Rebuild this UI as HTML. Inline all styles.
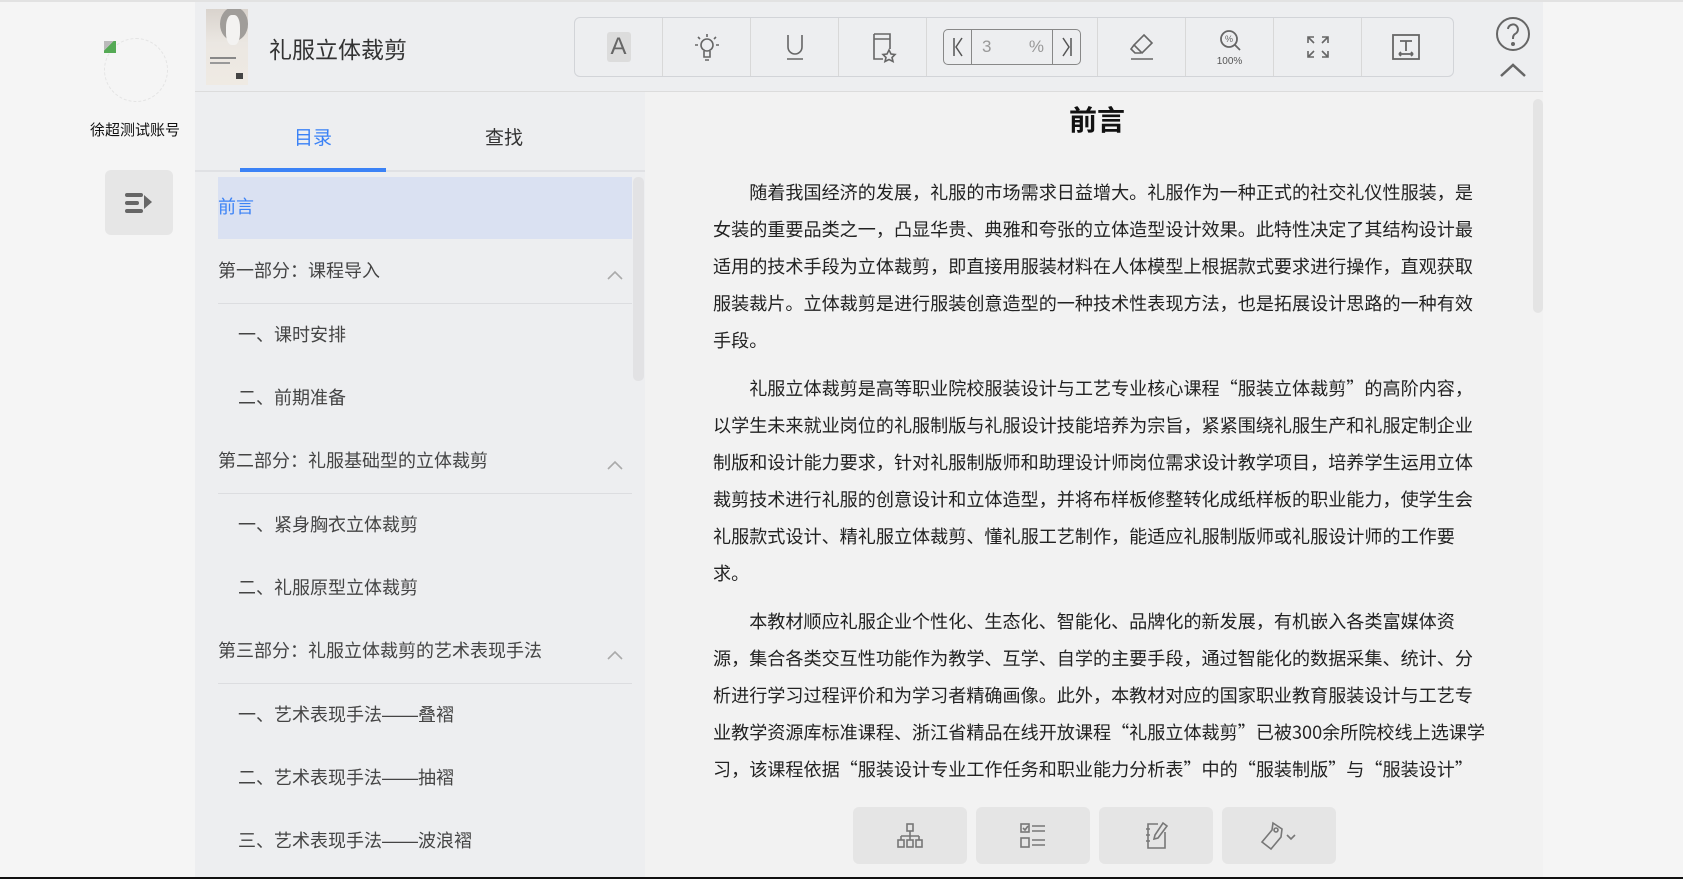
<!DOCTYPE html>
<html><head><meta charset="utf-8"><style>
*{margin:0;padding:0;box-sizing:border-box}
body{width:1683px;height:879px;overflow:hidden;background:#f5f5f5;font-family:"Liberation Sans","Noto Sans CJK SC",sans-serif;position:relative;color:#333}
.abs{position:absolute}
.topline{left:0;top:0;width:1683px;height:2px;background:#e2e2e2}
.header{left:195px;top:2px;width:1348px;height:90px;background:#edeef0;border-bottom:1px solid #dcdcdc}
.toc{left:195px;top:92px;width:450px;height:787px;background:#edeef0}
.content{left:645px;top:92px;width:898px;height:787px;background:#f2f2f2}
.tb{left:574px;top:17px;width:880px;height:60px;border:1px solid #d2d4d8;border-radius:6px;display:flex}
.tb .c{width:88px;height:100%;border-right:1px solid #d8d8d8;position:relative;display:flex;align-items:center;justify-content:center}
.tb .c:last-child{border-right:none}
.item{position:absolute;left:218px;font-size:18px;color:#444;white-space:nowrap}
.sub{left:238px}
.sep{position:absolute;left:218px;width:414px;height:1px;background:#dcdde0}
.chev{position:absolute;left:607px;width:16px;height:16px}
.p{position:absolute;left:713px;font-size:18.1px;color:#222;line-height:37px;white-space:nowrap;font-family:"Noto Sans CJK SC","Liberation Sans",sans-serif}
.btn{position:absolute;top:807px;width:114px;height:57px;background:#e5e5e5;border-radius:6px;display:flex;align-items:center;justify-content:center}
</style></head><body>
<div class="abs topline"></div>
<div class="abs" style="left:104px;top:38px;width:64px;height:64px;border-radius:50%;border:1px dashed #e4e4e4"></div>
<div class="abs" style="left:104px;top:41px;width:12px;height:12px;background:linear-gradient(135deg,#bbb 40%,#5a5 40%)"></div>
<div class="abs" style="left:70px;top:119px;width:130px;text-align:center;font-size:15px;color:#111">徐超测试账号</div>
<div class="abs" style="left:105px;top:170px;width:68px;height:65px;background:#e6e6e6;border-radius:6px">
<svg width="68" height="65" viewBox="0 0 68 65"><g fill="#666"><rect x="20" y="23" width="18" height="4" rx="2"/><rect x="20" y="31" width="14" height="4" rx="2"/><rect x="20" y="39" width="18" height="4" rx="2"/><path d="M39 25 L47 32 L39 39Z"/></g></svg></div>
<div class="abs header"></div>
<div class="abs" style="left:206px;top:9px;width:42px;height:76px;background:linear-gradient(180deg,#d9d3cd 0%,#ebe7e2 45%,#efeae3 100%);overflow:hidden">
<div class="abs" style="left:14px;top:-2px;width:28px;height:34px;border-radius:50%;background:#a09d9a"></div>
<div class="abs" style="left:20px;top:6px;width:14px;height:30px;background:#f3f2f1;border-radius:40%"></div>
<div class="abs" style="left:4px;top:48px;width:26px;height:2px;background:#888"></div>
<div class="abs" style="left:4px;top:53px;width:20px;height:2px;background:#999"></div>
<div class="abs" style="left:30px;top:64px;width:7px;height:6px;background:#444"></div></div>
<div class="abs" style="left:269px;top:31px;font-size:23px;color:#333">礼服立体裁剪</div>
<div class="abs tb">
<div class="c"><div style="width:24px;height:30px;background:#dcdcdc;border-radius:3px;text-align:center;font-size:24px;line-height:30px;color:#666">A</div></div>
<div class="c"><svg width="30" height="32" viewBox="0 0 30 32" fill="none" stroke="#666" stroke-width="1.6"><circle cx="15" cy="14" r="6"/><path d="M12 20v6h6v-6M13 29h4M15 3v3M6 6l2 2M24 6l-2 2M3 14h3M24 14h3"/></svg></div>
<div class="c"><svg width="24" height="30" viewBox="0 0 24 30" fill="none" stroke="#666" stroke-width="1.6"><path d="M5 3v12a7 7 0 0 0 14 0V3M4 27h16"/></svg></div>
<div class="c"><svg width="28" height="32" viewBox="0 0 28 32" fill="none" stroke="#666" stroke-width="1.6"><path d="M5 3h16v15M5 3v25h9M5 8h16"/><path d="M20 19l2 4 4 .5-3 3 1 4-4-2-4 2 1-4-3-3 4-.5z"/></svg></div>
<div class="c" style="width:171px"><div style="width:138px;height:36px;border:1px solid #888;border-radius:5px;display:flex;font-size:17px;color:#999;align-items:center"><span style="width:28px;border-right:1px solid #888;height:100%;display:flex;align-items:center;justify-content:center"><svg width="14" height="22" viewBox="0 0 14 22" fill="none" stroke="#555" stroke-width="1.5"><path d="M3 2v18M11 2L5 11l6 9"/></svg></span><span style="flex:1;padding-left:10px">3<span style="float:right;padding-right:8px">%</span></span><span style="width:28px;border-left:1px solid #888;height:100%;display:flex;align-items:center;justify-content:center"><svg width="14" height="22" viewBox="0 0 14 22" fill="none" stroke="#555" stroke-width="1.5"><path d="M11 2v18M3 2l6 9-6 9"/></svg></span></div></div>
<div class="c"><svg width="30" height="32" viewBox="0 0 30 32" fill="none" stroke="#666" stroke-width="1.6"><path d="M17 4l8 8-10 10-8-8zM7 14l-3 4 4 4h6M4 28h22"/></svg></div>
<div class="c" style="flex-direction:column"><svg width="26" height="26" viewBox="0 0 26 26" fill="none" stroke="#666" stroke-width="1.8"><circle cx="12" cy="11" r="8"/><path d="M18 17l5 5"/><text x="12" y="14" font-size="9" text-anchor="middle" fill="#666" stroke="none" font-family="Liberation Sans">%</text></svg><div style="font-size:10px;color:#555;margin-top:2px">100%</div></div>
<div class="c"><svg width="28" height="28" viewBox="0 0 28 28" fill="none" stroke="#666" stroke-width="1.6"><path d="M4 10V4h6M4 4l6 6M24 10V4h-6M24 4l-6 6M4 18v6h6M4 24l6-6M24 18v6h-6M24 24l-6-6"/></svg></div>
<div class="c"><svg width="32" height="30" viewBox="0 0 32 30" fill="none" stroke="#666" stroke-width="1.8"><rect x="3" y="3" width="26" height="24"/><path d="M10 9h12M16 9v10M9 22h14M9 22l2-2M9 22l2 2M23 22l-2-2M23 22l-2 2"/></svg></div>
</div>
<svg class="abs" style="left:1494px;top:16px" width="38" height="66" viewBox="0 0 38 66" fill="none" stroke="#666" stroke-width="2"><circle cx="19" cy="18" r="16"/><path d="M14 13a5 5 0 1 1 7 5c-2 1-2 3-2 5"/><circle cx="19" cy="28" r="1" fill="#666"/><path d="M7 60l12-11 12 11" stroke-width="2.5"/></svg>
<div class="abs toc"></div>
<div class="abs" style="left:294px;top:123px;font-size:19px;color:#3b82f6">目录</div>
<div class="abs" style="left:485px;top:123px;font-size:19px;color:#333">查找</div>
<div class="abs" style="left:195px;top:170px;width:450px;height:2px;background:#e0e1e4"></div>
<div class="abs" style="left:240px;top:168px;width:146px;height:4px;background:#3b82f6"></div>
<div class="abs" style="left:218px;top:177px;width:414px;height:62px;background:#dae1f2"></div>
<div class="abs" style="left:633px;top:177px;width:11px;height:204px;background:#e2e2e4;border-radius:5px"></div>
<div class="item" style="top:193px;color:#3b82f6">前言</div>
<div class="item" style="top:257px">第一部分：课程导入</div>
<svg class="chev" style="top:268px" viewBox="0 0 16 16" fill="none" stroke="#aaa" stroke-width="1.6"><path d="M1 11l7-7 7 7"/></svg>
<div class="sep" style="top:303px"></div>
<div class="item sub" style="top:321px">一、课时安排</div>
<div class="item sub" style="top:384px">二、前期准备</div>
<div class="item" style="top:447px">第二部分：礼服基础型的立体裁剪</div>
<svg class="chev" style="top:458px" viewBox="0 0 16 16" fill="none" stroke="#aaa" stroke-width="1.6"><path d="M1 11l7-7 7 7"/></svg>
<div class="sep" style="top:493px"></div>
<div class="item sub" style="top:511px">一、紧身胸衣立体裁剪</div>
<div class="item sub" style="top:574px">二、礼服原型立体裁剪</div>
<div class="item" style="top:637px">第三部分：礼服立体裁剪的艺术表现手法</div>
<svg class="chev" style="top:648px" viewBox="0 0 16 16" fill="none" stroke="#aaa" stroke-width="1.6"><path d="M1 11l7-7 7 7"/></svg>
<div class="sep" style="top:683px"></div>
<div class="item sub" style="top:701px">一、艺术表现手法——叠褶</div>
<div class="item sub" style="top:764px">二、艺术表现手法——抽褶</div>
<div class="item sub" style="top:827px">三、艺术表现手法——波浪褶</div>
<div class="abs content"></div>
<div class="abs" style="left:1533px;top:99px;width:10px;height:214px;background:#e4e4e4;border-radius:5px"></div>
<div class="abs" style="left:1037px;top:99px;width:120px;text-align:center;font-size:28px;font-weight:bold;color:#111">前言</div>
<div class="p" style="top:174px">
<div>　　随着我国经济的发展，礼服的市场需求日益增大。礼服作为一种正式的社交礼仪性服装，是</div>
<div>女装的重要品类之一，凸显华贵、典雅和夸张的立体造型设计效果。此特性决定了其结构设计最</div>
<div>适用的技术手段为立体裁剪，即直接用服装材料在人体模型上根据款式要求进行操作，直观获取</div>
<div>服装裁片。立体裁剪是进行服装创意造型的一种技术性表现方法，也是拓展设计思路的一种有效</div>
<div>手段。</div>
<div style="margin-top:11px">　　礼服立体裁剪是高等职业院校服装设计与工艺专业核心课程“服装立体裁剪”的高阶内容，</div>
<div>以学生未来就业岗位的礼服制版与礼服设计技能培养为宗旨，紧紧围绕礼服生产和礼服定制企业</div>
<div>制版和设计能力要求，针对礼服制版师和助理设计师岗位需求设计教学项目，培养学生运用立体</div>
<div>裁剪技术进行礼服的创意设计和立体造型，并将布样板修整转化成纸样板的职业能力，使学生会</div>
<div>礼服款式设计、精礼服立体裁剪、懂礼服工艺制作，能适应礼服制版师或礼服设计师的工作要</div>
<div>求。</div>
<div style="margin-top:11px">　　本教材顺应礼服企业个性化、生态化、智能化、品牌化的新发展，有机嵌入各类富媒体资</div>
<div>源，集合各类交互性功能作为教学、互学、自学的主要手段，通过智能化的数据采集、统计、分</div>
<div>析进行学习过程评价和为学习者精确画像。此外，本教材对应的国家职业教育服装设计与工艺专</div>
<div>业教学资源库标准课程、浙江省精品在线开放课程“礼服立体裁剪”已被300余所院校线上选课学</div>
<div>习，该课程依据“服装设计专业工作任务和职业能力分析表”中的“服装制版”与“服装设计”</div>
</div>
<div class="abs" style="left:645px;top:790px;width:888px;height:89px;background:#f2f2f2"></div>
<div class="btn" style="left:853px"><svg width="30" height="30" viewBox="0 0 30 30" fill="none" stroke="#777" stroke-width="1.6"><rect x="12" y="3" width="6" height="7"/><path d="M15 10v5M6 15h18M6 15v4M15 15v4M24 15v4"/><rect x="3" y="19" width="6" height="7"/><rect x="12" y="19" width="6" height="7"/><rect x="21" y="19" width="6" height="7"/></svg></div>
<div class="btn" style="left:976px"><svg width="30" height="30" viewBox="0 0 30 30" fill="none" stroke="#777" stroke-width="1.6"><rect x="3" y="3" width="8" height="8"/><path d="M5 7l2 2 3-4M14 5h13M14 10h13"/><rect x="3" y="17" width="8" height="9"/><path d="M14 19h13M14 24h13"/></svg></div>
<div class="btn" style="left:1099px"><svg width="30" height="32" viewBox="0 0 30 32" fill="none" stroke="#777" stroke-width="1.6"><path d="M17 4H7v24h17V12M5 9h4M5 15h4M5 21h4M22 3l4 3-9 12-4 1 1-4z"/></svg></div>
<div class="btn" style="left:1222px"><svg width="44" height="32" viewBox="0 0 44 32" fill="none" stroke="#777" stroke-width="1.6"><path d="M16 3l9 6-1 8-10 12-9-7 10-12z"/><circle cx="19" cy="10" r="2"/><path d="M30 15l4 4 4-4"/></svg></div>
<div class="abs" style="left:0;top:877px;width:1683px;height:2px;background:#111"></div>
</body></html>
